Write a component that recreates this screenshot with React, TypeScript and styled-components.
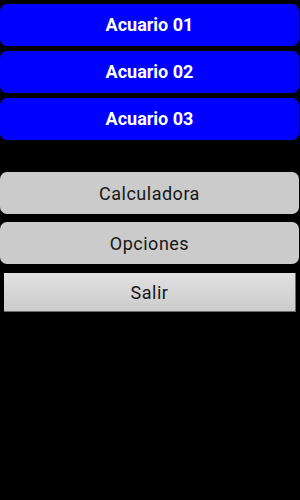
import React from 'react';
import styled, { createGlobalStyle } from 'styled-components';

const GlobalStyle = createGlobalStyle`
  html, body {
    margin: 0;
    padding: 0;
    background: #000;
  }
  body {
    font-family: Roboto, "Noto Sans", "Liberation Sans", sans-serif;
  }
`;

const Screen = styled.div`
  width: 300px;
  height: 500px;
  background: #000;
  display: flex;
  flex-direction: column;
  padding-top: 4px;
  box-sizing: border-box;
`;

const Group = styled.div<{ $gap: number; $top?: number }>`
  display: flex;
  flex-direction: column;
  gap: ${(p) => p.$gap}px;
  margin-top: ${(p) => p.$top ?? 0}px;
`;

const AquariumButton = styled.button`
  height: 42px;
  width: 299px;
  border: none;
  border-radius: 7px;
  background: #0000ff;
  color: #fff;
  font-family: Roboto, "Noto Sans", "Liberation Sans", sans-serif;
  font-weight: 700;
  font-size: 18px;
  padding: 0 0 1px 0;
  cursor: pointer;
`;

const MenuButton = styled.button`
  height: 42px;
  width: 299px;
  border: none;
  border-radius: 7px;
  background: #cbcbcb;
  color: #161616;
  font-family: Roboto, "Noto Sans", "Liberation Sans", sans-serif;
  font-size: 18px;
  letter-spacing: 0.5px;
  padding: 0;
  cursor: pointer;
`;

const ExitButton = styled.button`
  height: 39px;
  margin: 1px 4px 0 4px;
  width: 292px;
  border: none;
  border-radius: 0;
  border-right: 1px solid #6a6a6a;
  border-bottom: 1px solid #6a6a6a;
  background: linear-gradient(to bottom, #e2e2e2 0%, #d6d6d6 50%, #cccccc 100%);
  color: #161616;
  font-family: Roboto, "Noto Sans", "Liberation Sans", sans-serif;
  font-size: 18px;
  letter-spacing: 0.5px;
  padding: 0;
  box-sizing: border-box;
  cursor: pointer;
`;

const aquariums = ['Acuario 01', 'Acuario 02', 'Acuario 03'];

export default function App() {
  return (
    <>
      <GlobalStyle />
      <Screen>
        <Group $gap={5}>
          {aquariums.map((name) => (
            <AquariumButton key={name}>{name}</AquariumButton>
          ))}
        </Group>
        <Group $gap={8} $top={32}>
          <MenuButton>Calculadora</MenuButton>
          <MenuButton>Opciones</MenuButton>
          <ExitButton>Salir</ExitButton>
        </Group>
      </Screen>
    </>
  );
}
